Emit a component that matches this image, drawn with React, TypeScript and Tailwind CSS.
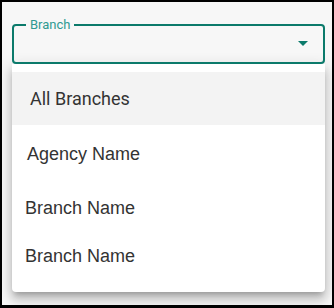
import React from "react";

export default function App() {
  return (
    <div className="w-[334px] h-[308px] border-2 border-b-[3px] border-black bg-[#f7f7f7] overflow-hidden box-border">
      <div className="ml-[10px] mt-[22px] w-[313px]">
        <div className="relative h-[40px] border-2 border-[#0b7a6b] rounded-[4px] flex items-center justify-end pr-[15px] pb-[2px]">
          <span
            className="absolute left-[12px] top-[-9px] px-[4px] bg-[#f7f7f7] text-[13px] leading-[15px] text-[#2f9a92]"
            style={{ fontFamily: "Roboto, sans-serif" }}
          >
            Branch
          </span>
          <svg width="10" height="5" viewBox="0 0 10 5">
            <polygon points="0,0 10,0 5,5" fill="#0b7a6b" />
          </svg>
        </div>
        <div className="w-[313px] h-[228px] bg-white rounded-b-[4px] pt-[8px] shadow-[0_5px_5px_-3px_rgba(0,0,0,0.2),0_8px_10px_1px_rgba(0,0,0,0.14),0_3px_14px_2px_rgba(0,0,0,0.12)]">
          <div
            className="h-[53px] bg-[#f3f3f3] pl-[18px] text-[18px] leading-[53px] text-[#333]"
            style={{ fontFamily: "Roboto, sans-serif" }}
          >
            All Branches
          </div>
          <div style={{ fontFamily: "'Liberation Sans', Arial, sans-serif" }} className="text-[18px] leading-[20px] text-[#333]">
            <div className="h-[55px] pt-[19px] pl-[15px]">Agency Name</div>
            <div className="h-[50px] pt-[18px] pl-[13px]">Branch Name</div>
            <div className="pt-[16px] pl-[13px]">Branch Name</div>
          </div>
        </div>
      </div>
    </div>
  );
}
